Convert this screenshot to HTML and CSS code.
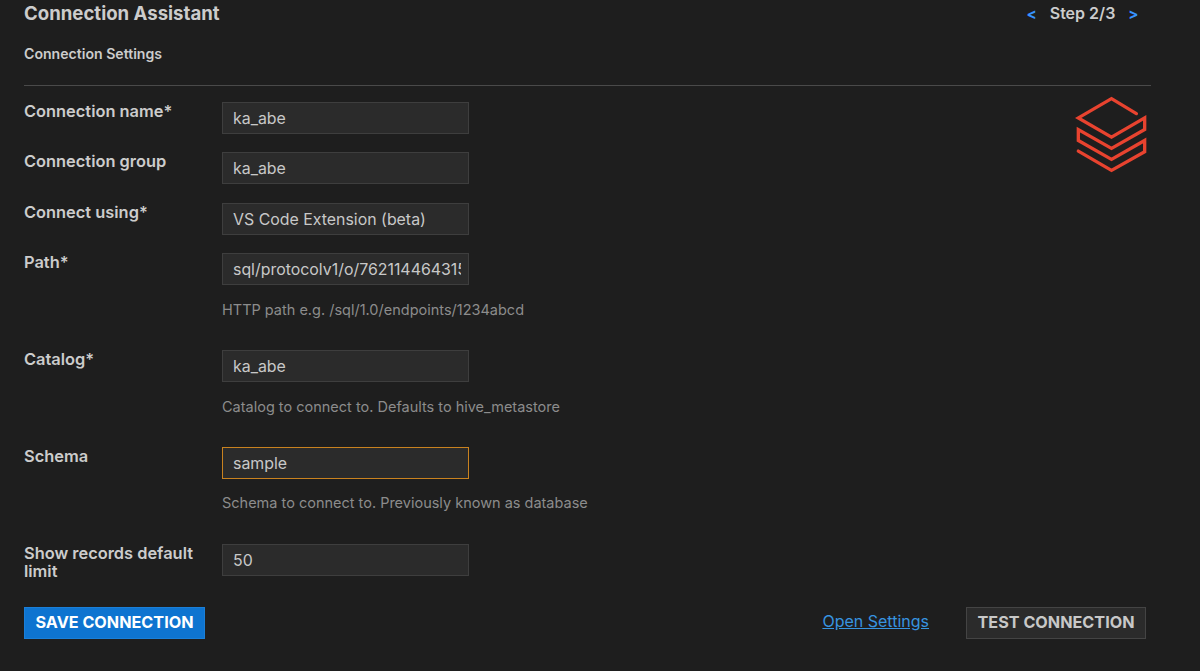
FILE: index.html
```html
<!DOCTYPE html>
<html lang="en">
<head>
<meta charset="utf-8">
<title>Connection Assistant</title>
<link rel="stylesheet" href="styles.css">
</head>
<body>
<div class="page">
  <header class="top">
    <h1 class="title">Connection Assistant</h1>
    <div class="stepper">
      <span class="arrow">&lt;</span>
      <span class="step">Step 2/3</span>
      <span class="arrow">&gt;</span>
    </div>
  </header>
  <h2 class="subtitle">Connection Settings</h2>
  <hr class="rule">
  <div class="main">
    <form class="form">
      <div class="row"><label class="label">Connection name*</label><div class="field"><div class="input"><span class="value">ka_abe</span></div></div></div>
      <div class="row"><label class="label">Connection group</label><div class="field"><div class="input"><span class="value">ka_abe</span></div></div></div>
      <div class="row"><label class="label">Connect using*</label><div class="field"><div class="input"><span class="value">VS Code Extension (beta)</span></div></div></div>
      <div class="row"><label class="label">Path*</label><div class="field"><div class="input"><span class="value">sql/protocolv1/o/762114464315</span></div><p class="help">HTTP path e.g. /sql/1.0/endpoints/1234abcd</p></div></div>
      <div class="row"><label class="label">Catalog*</label><div class="field"><div class="input"><span class="value">ka_abe</span></div><p class="help">Catalog to connect to. Defaults to hive_metastore</p></div></div>
      <div class="row"><label class="label">Schema</label><div class="field"><div class="input focused"><span class="value">sample</span></div><p class="help">Schema to connect to. Previously known as database</p></div></div>
      <div class="row"><label class="label">Show records default limit</label><div class="field"><div class="input"><span class="value">50</span></div></div></div>
    </form>
    <svg class="logo" viewBox="225 285 220 230" aria-hidden="true">
      <path d="M410 337 335 292 235 350 335 408 435 350V385L335 442 235 385V418L335 475 435 418V452L335 508 235 450"/>
    </svg>
  </div>
  <footer class="actions">
    <button class="btn primary" type="button">SAVE CONNECTION</button>
    <div class="actions-right">
      <a class="link" href="#">Open Settings</a>
      <button class="btn secondary" type="button">TEST CONNECTION</button>
    </div>
  </footer>
</div>
</body>
</html>
```
FILE: styles.css
```css
* { box-sizing: border-box; }
html, body { margin: 0; height: 100%; }
body {
  background: #1e1e1e;
  color: #cccccc;
  font-family: Inter, "Liberation Sans", sans-serif;
  overflow: hidden;
}
.page { width: 1151px; padding: 0 0 0 24px; }
.top {
  display: flex;
  justify-content: space-between;
  align-items: center;
  height: 26px;
  padding-right: 12.5px;
}
.title { margin: 0; font-size: 18.6px; font-weight: 700; color: #cccccc; }
.stepper { display: flex; gap: 13px; align-items: center; font-size: 16px; font-weight: 600; }
.arrow { color: #3794ff; font-size: 15px; font-weight: 700; }
.step { color: #cccccc; }
.subtitle { margin: 20px 0 0; font-size: 14.1px; line-height: 15px; font-weight: 600; color: #cccccc; }
.rule { margin: 24px 0 0; border: 0; border-top: 1px solid #4a4a4a; height: 1px; }
.main { display: flex; justify-content: space-between; align-items: flex-start; padding-top: 16px; }
.form { width: 500px; }
.row { display: flex; margin-bottom: 18.4px; }
.row:last-child { margin-bottom: 0; }
.label { width: 198px; flex: none; padding: 0 10px 0 0; font-size: 16.4px; line-height: 18.5px; font-weight: 600; color: #cccccc; }
.field { width: 247px; flex: none; }
.input {
  height: 32px;
  padding: 0 7px 0 10px;
  background: #2b2b2b;
  border: 1px solid #3e3e3e;
  color: #c8c8c8;
  font-size: 15.9px;
  line-height: 31px;
}
.value { display: block; overflow: hidden; white-space: nowrap; }
.focused { border-color: #c9821f; }
.help { margin: 14.5px 0 13px; width: 420px; font-size: 14.5px; line-height: 19px; color: #8c8c8c; white-space: nowrap; }
.logo { width: 73px; height: 77px; margin: -6px 3px 0 0; fill: none; stroke: #e8432f; stroke-width: 10; stroke-linecap: round; stroke-linejoin: miter; }
.actions { display: flex; justify-content: space-between; align-items: center; margin-top: 26px; padding-right: 5px; }
.actions-right { display: flex; align-items: center; gap: 37px; }
.btn {
  height: 32px;
  font-family: inherit;
  font-size: 16.2px;
  font-weight: 700;
  padding: 0 0 1px;
  cursor: pointer;
}
.primary { width: 181px; background: #0e74d0; border: 1px solid #1a7fd8; color: #ffffff; }
.secondary { width: 180px; background: #2b2b2b; border: 1px solid #444444; color: #c8c8c8; }
.link { color: #3794e0; font-size: 16px; text-decoration: underline; margin-bottom: 3px; }
```
